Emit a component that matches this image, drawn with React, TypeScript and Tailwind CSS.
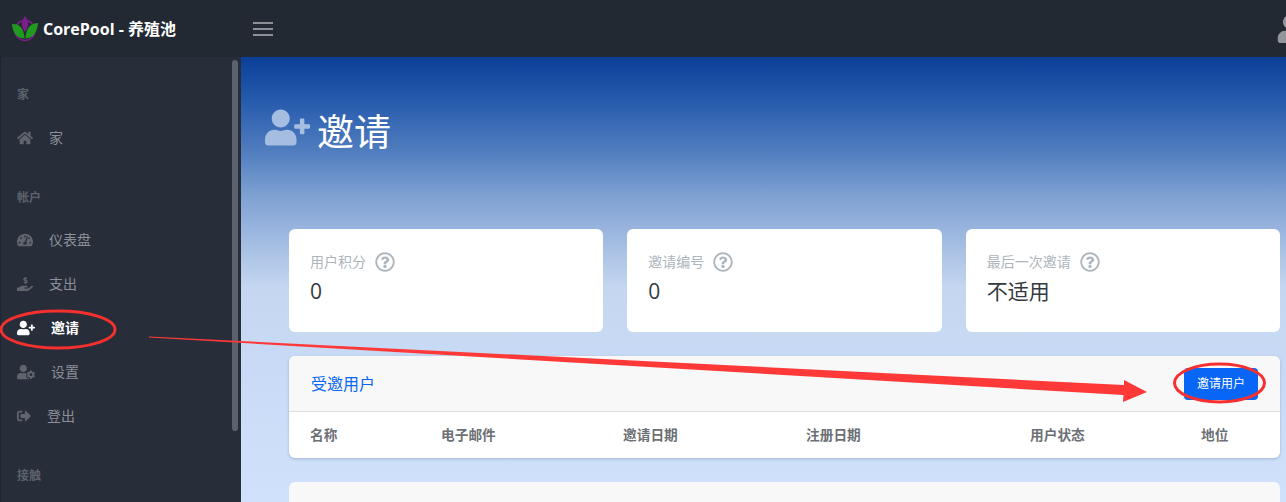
import { FaHome, FaTachometerAlt, FaHandHoldingUsd, FaUserPlus, FaUserCog, FaSignOutAlt, FaRegQuestionCircle, FaUser } from 'react-icons/fa';
import type { ReactNode } from 'react';

function Logo() {
  return (
    <svg width="26" height="26" viewBox="0 0 26 26" className="shrink-0">
      <circle cx="13" cy="14.5" r="10" fill="none" stroke="#7a1f8a" strokeWidth="1.4" />
      <path d="M13 0 C17 5 17.5 10 13 16 C8.5 10 9 5 13 0Z" fill="#7a1f8a" />
      <path d="M0 8 C7 7.5 12 12 12.6 22.5 C5 22.5 0.5 17 0 8Z" fill="#1f9a1f" />
      <path d="M26 7 C19 7 14 11.5 13.4 22.5 C21 22.5 25.5 16 26 7Z" fill="#1f9a1f" />
    </svg>
  );
}

function SectionLabel({ children, className }: { children: ReactNode; className: string }) {
  return <div className={`pl-4 text-xs font-bold leading-4 text-[#5c626b] ${className}`}>{children}</div>;
}

function NavItem({ icon, label, active }: { icon: ReactNode; label: string; active?: boolean }) {
  return (
    <div className={`flex h-11 items-center gap-4 pl-4 text-sm ${active ? 'font-bold text-white' : 'text-[#8b9097]'}`}>
      <span className={`flex items-center ${active ? 'text-white' : 'text-[#5f646d]'}`}>{icon}</span>
      <span>{label}</span>
    </div>
  );
}

function StatCard({ label, value }: { label: string; value: string }) {
  return (
    <div className="h-[103px] flex-1 rounded-md bg-white pl-[21px] pt-[23px]">
      <div className="flex items-center gap-[9px] text-sm leading-5 text-[#adb5bd]">
        {label}
        <FaRegQuestionCircle size={20} className="text-[#adb5bd]" />
      </div>
      <div className="mt-[5px] text-[21px] leading-7 text-[#343a40]">{value}</div>
    </div>
  );
}

export default function App() {
  return (
    <div className="relative flex h-[502px] w-[1286px] flex-col overflow-hidden font-['Open_Sans','Noto_Sans_CJK_SC',sans-serif]">
      <header className="flex h-[57px] shrink-0 items-center overflow-hidden bg-[#232933]">
        <div className="flex w-[253px] shrink-0 items-center gap-[5px] pl-3">
          <Logo />
          <span className="text-base font-bold text-white">CorePool - 养殖池</span>
        </div>
        <div className="flex w-5 flex-col gap-1">
          <span className="h-[2px] bg-[#8d9196]" />
          <span className="h-[2px] bg-[#8d9196]" />
          <span className="h-[2px] bg-[#8d9196]" />
        </div>
        <FaUser size={28} className="ml-auto mr-[-18px] mt-px text-[#93969b]" />
      </header>

      <div className="flex min-h-0 flex-1">
        <aside className="relative w-[241px] shrink-0 overflow-hidden border-l border-[#1f2530] bg-[#272d39] pt-[30px]">
          <SectionLabel className="">家</SectionLabel>
          <div className="mt-[13px]">
            <NavItem icon={<FaHome size={16} />} label="家" />
          </div>
          <SectionLabel className="mt-[30px]">帐户</SectionLabel>
          <div className="mt-3">
            <NavItem icon={<FaTachometerAlt size={16} />} label="仪表盘" />
            <NavItem icon={<FaHandHoldingUsd size={16} />} label="支出" />
            <NavItem icon={<FaUserPlus size={18} />} label="邀请" active />
            <NavItem icon={<FaUserCog size={18} />} label="设置" />
            <NavItem icon={<FaSignOutAlt size={14} />} label="登出" />
          </div>
          <SectionLabel className="mt-[30px]">接触</SectionLabel>
          <div className="absolute right-[3px] top-[3px] h-[371px] w-[6px] rounded-full bg-[#5c626c]" />
        </aside>

        <main className="min-w-0 flex-1 overflow-hidden bg-[linear-gradient(180deg,#0b3f98_0%,#2a5eaf_11%,#5480c0_22%,#7a9dd0_30%,#93b0dc_37%,#aec5e6_45%,#c5d7f0_52%,#c8daf5_70%,#d0e2fb_100%)] pl-[24px] pr-[6px]">
          <div className="flex h-[172px] items-start pt-[50px] text-white">
            <FaUserPlus size={45} className="-mt-0.5 text-[#a6bde2]" />
            <h1 className="ml-[7px] text-[37px] leading-[50px]">邀请</h1>
          </div>

          <div className="ml-[24px]">
            <div className="flex gap-6">
              <StatCard label="用户积分" value="0" />
              <StatCard label="邀请编号" value="0" />
              <StatCard label="最后一次邀请" value="不适用" />
            </div>

            <div className="mt-6 overflow-hidden rounded-md bg-white shadow-[0_1px_3px_rgba(60,80,120,0.3)]">
              <div className="flex h-[56px] items-center justify-between border-b border-[#dfdfdf] bg-[#f8f8f8] pl-[22px] pr-[22px]">
                <span className="text-base text-[#0866f6]">受邀用户</span>
                <button className="h-8 w-[74px] rounded-sm bg-[#0866f6] text-xs text-white">邀请用户</button>
              </div>
              <div className="flex h-[46px] items-center pl-[21px] text-[13.7px] font-bold text-[#6c7075]">
                <span className="w-[131px]">名称</span>
                <span className="w-[182px]">电子邮件</span>
                <span className="w-[183px]">邀请日期</span>
                <span className="w-[224px]">注册日期</span>
                <span className="w-[171px]">用户状态</span>
                <span>地位</span>
              </div>
            </div>

            <div className="mt-6 h-10 rounded-md bg-[#f8f8f8]" />
          </div>
        </main>
      </div>

      {/* red marks drawn over the screenshot */}
      <svg className="pointer-events-none absolute left-0 top-0" width="1286" height="502" viewBox="0 0 1286 502">
        <path d="M149 336.5 L1124 385 L1124 380 L1147 392 L1123 402 L1123.5 395 L149 337.5 Z" fill="#ff3838" />
        <ellipse cx="58" cy="329.5" rx="57" ry="18.5" fill="none" stroke="#f5302f" strokeWidth="3" />
        <ellipse cx="1219.5" cy="383" rx="45" ry="19" fill="none" stroke="#f5302f" strokeWidth="3" />
      </svg>
    </div>
  );
}
